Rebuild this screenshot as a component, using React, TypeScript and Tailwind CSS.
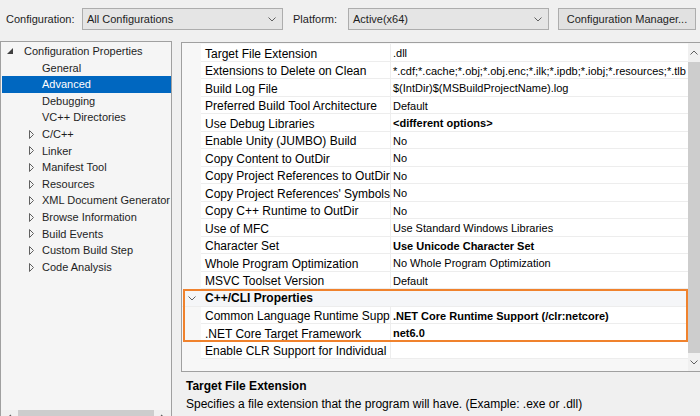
import React from "react";

type TreeItem = { label: string; level: number; arrow?: "open" | "closed"; selected?: boolean };

const treeItems: TreeItem[] = [
  { label: "Configuration Properties", level: 0, arrow: "open" },
  { label: "General", level: 1 },
  { label: "Advanced", level: 1, selected: true },
  { label: "Debugging", level: 1 },
  { label: "VC++ Directories", level: 1 },
  { label: "C/C++", level: 1, arrow: "closed" },
  { label: "Linker", level: 1, arrow: "closed" },
  { label: "Manifest Tool", level: 1, arrow: "closed" },
  { label: "Resources", level: 1, arrow: "closed" },
  { label: "XML Document Generator", level: 1, arrow: "closed" },
  { label: "Browse Information", level: 1, arrow: "closed" },
  { label: "Build Events", level: 1, arrow: "closed" },
  { label: "Custom Build Step", level: 1, arrow: "closed" },
  { label: "Code Analysis", level: 1, arrow: "closed" },
];

type Prop = { name: string; value: string; bold?: boolean };

const advancedProps: Prop[] = [
  { name: "Target File Extension", value: ".dll" },
  {
    name: "Extensions to Delete on Clean",
    value: "*.cdf;*.cache;*.obj;*.obj.enc;*.ilk;*.ipdb;*.iobj;*.resources;*.tlb",
  },
  { name: "Build Log File", value: "$(IntDir)$(MSBuildProjectName).log" },
  { name: "Preferred Build Tool Architecture", value: "Default" },
  { name: "Use Debug Libraries", value: "<different options>", bold: true },
  { name: "Enable Unity (JUMBO) Build", value: "No" },
  { name: "Copy Content to OutDir", value: "No" },
  { name: "Copy Project References to OutDir", value: "No" },
  { name: "Copy Project References' Symbols", value: "No" },
  { name: "Copy C++ Runtime to OutDir", value: "No" },
  { name: "Use of MFC", value: "Use Standard Windows Libraries" },
  { name: "Character Set", value: "Use Unicode Character Set", bold: true },
  { name: "Whole Program Optimization", value: "No Whole Program Optimization" },
  { name: "MSVC Toolset Version", value: "Default" },
];

// names are cut by the column edge in the dialog
const cliProps: Prop[] = [
  { name: "Common Language Runtime Supp", value: ".NET Core Runtime Support (/clr:netcore)", bold: true },
  { name: ".NET Core Target Framework", value: "net6.0", bold: true },
];

const Chevron = ({ className = "" }: { className?: string }) => (
  <svg width="8" height="5" viewBox="0 0 8 5" className={className}>
    <polyline points="0.5,0.5 4,4 7.5,0.5" fill="none" stroke="#606060" strokeWidth="1" />
  </svg>
);

const Combo = ({ text, width }: { text: string; width: string }) => (
  <div className={`${width} h-[22px] flex items-center justify-between border border-[#adadad] bg-[#e5e5e5] pl-[4px] pr-[6px]`}>
    <span>{text}</span>
    <Chevron />
  </div>
);

const PropRow = ({ p }: { p: Prop }) => (
  <div className="flex h-[17.5px] shrink-0">
    <div className="w-[19px] shrink-0 bg-[#f7f7f7]" />
    <div className="w-[190px] shrink-0 flex items-center pl-[4px] pt-[3px] bg-white border-b border-r border-[#ededed] overflow-hidden whitespace-nowrap text-[12px] text-black">
      {p.name}
    </div>
    <div
      className={`flex-1 min-w-0 flex items-center pl-[2px] pt-[2px] bg-white border-b border-[#ededed] overflow-hidden whitespace-nowrap text-[11px] text-black ${
        p.bold ? "font-bold" : ""
      }`}
    >
      {p.value}
    </div>
  </div>
);

export default function App() {
  return (
    <div
      className="w-[700px] h-[416px] overflow-hidden bg-[#f0f0f0] flex flex-col text-[11px] text-[#1e1e1e]"
      style={{ fontFamily: '"Liberation Sans", Arial, sans-serif' }}
    >
      {/* Top bar */}
      <div className="h-[41px] shrink-0 flex items-start pt-[8px] pl-[6px]">
        <div className="h-[22px] flex items-center w-[76px]">Configuration:</div>
        <Combo text="All Configurations" width="w-[201px]" />
        <div className="h-[22px] flex items-center ml-[10px] w-[55px]">Platform:</div>
        <Combo text="Active(x64)" width="w-[201px]" />
        <div className="ml-[9px] w-[138px] h-[22px] flex items-center justify-center border border-[#adadad] bg-[#e1e1e1]">
          Configuration Manager...
        </div>
      </div>

      {/* Body */}
      <div className="flex flex-1 min-h-0 items-start">
        {/* Tree panel */}
        <div className="w-[172px] h-[387px] shrink-0 flex flex-col border border-[#a0a0a0] bg-[#f5f5f5]">
          <div className="flex-1 flex flex-col pt-[1px]">
            {treeItems.map((t) => (
              <div
                key={t.label}
                className={`h-[16.6px] flex items-center whitespace-nowrap ${
                  t.selected ? "bg-[#0067c0] text-white ml-[1px]" : ""
                }`}
                style={{ paddingLeft: t.selected ? 40 : t.level === 0 ? 6 : t.arrow ? 28 : 41 }}
              >
                {t.arrow === "open" && (
                  <svg width="6" height="6" viewBox="0 0 6 6" className="mr-[11px]">
                    <polygon points="6,0 6,6 0,6" fill="#404040" />
                  </svg>
                )}
                {t.arrow === "closed" && (
                  <svg width="5" height="9" viewBox="0 0 5 9" className="mr-[8px]">
                    <polygon points="0.5,0.5 4.5,4.5 0.5,8.5" fill="none" stroke="#606060" strokeWidth="1" />
                  </svg>
                )}
                <span>{t.label}</span>
              </div>
            ))}
          </div>
          {/* horizontal scrollbar */}
          <div className="h-[17px] shrink-0 flex items-center bg-[#f0f0f0]">
            <svg width="17" height="17" viewBox="0 0 17 17">
              <polyline points="10,5 6,8.5 10,12" fill="none" stroke="#606060" strokeWidth="1.2" />
            </svg>
            <div className="flex-1 h-[17px] bg-[#cdcdcd]" />
            <svg width="17" height="17" viewBox="0 0 17 17">
              <polyline points="7,5 11,8.5 7,12" fill="none" stroke="#606060" strokeWidth="1.2" />
            </svg>
          </div>
        </div>

        {/* Right column */}
        <div className="flex-1 min-w-0 ml-[9px] mt-[1px] flex flex-col">
          {/* Property grid */}
          <div className="h-[330px] shrink-0 flex border-l border-t border-b border-[#a0a0a0] bg-white">
            <div className="flex-1 min-w-0 flex flex-col pt-[1px] bg-[#f7f7f7]">
              {advancedProps.map((p) => (
                <PropRow key={p.name} p={p} />
              ))}
              <div className="relative flex flex-col">
                <div className="flex h-[17.5px] items-center pt-[2px] bg-[#f5f6f8] border-b border-[#ededed]">
                  <div className="w-[19px] flex justify-center">
                    <Chevron />
                  </div>
                  <span className="pl-[4px] text-[12px] font-bold text-black">C++/CLI Properties</span>
                </div>
                {cliProps.map((p) => (
                  <PropRow key={p.name} p={p} />
                ))}
                <div className="absolute inset-0 border-2 border-[#f0822d] ml-[1px]" />
              </div>
              <PropRow p={{ name: "Enable CLR Support for Individual", value: "" }} />
            </div>
            {/* vertical scrollbar */}
            <div className="w-[12px] shrink-0 flex flex-col bg-[#f0f0f0]">
              <div className="h-[19px] flex items-center justify-center">
                <svg width="8" height="5" viewBox="0 0 8 5">
                  <polyline points="0.5,4.5 4,1 7.5,4.5" fill="none" stroke="#606060" strokeWidth="1" />
                </svg>
              </div>
              <div className="flex-1 bg-[#cdcdcd]" />
              <div className="h-[18px] flex items-center justify-center">
                <Chevron />
              </div>
            </div>
          </div>

          {/* Description */}
          <div className="pt-[6px] pl-[5px] text-[12px] text-black">
            <div className="font-bold leading-[16px]">Target File Extension</div>
            <div className="leading-[18px] mt-[1px]">
              Specifies a file extension that the program will have. (Example: .exe or .dll)
            </div>
          </div>
        </div>
      </div>
    </div>
  );
}
